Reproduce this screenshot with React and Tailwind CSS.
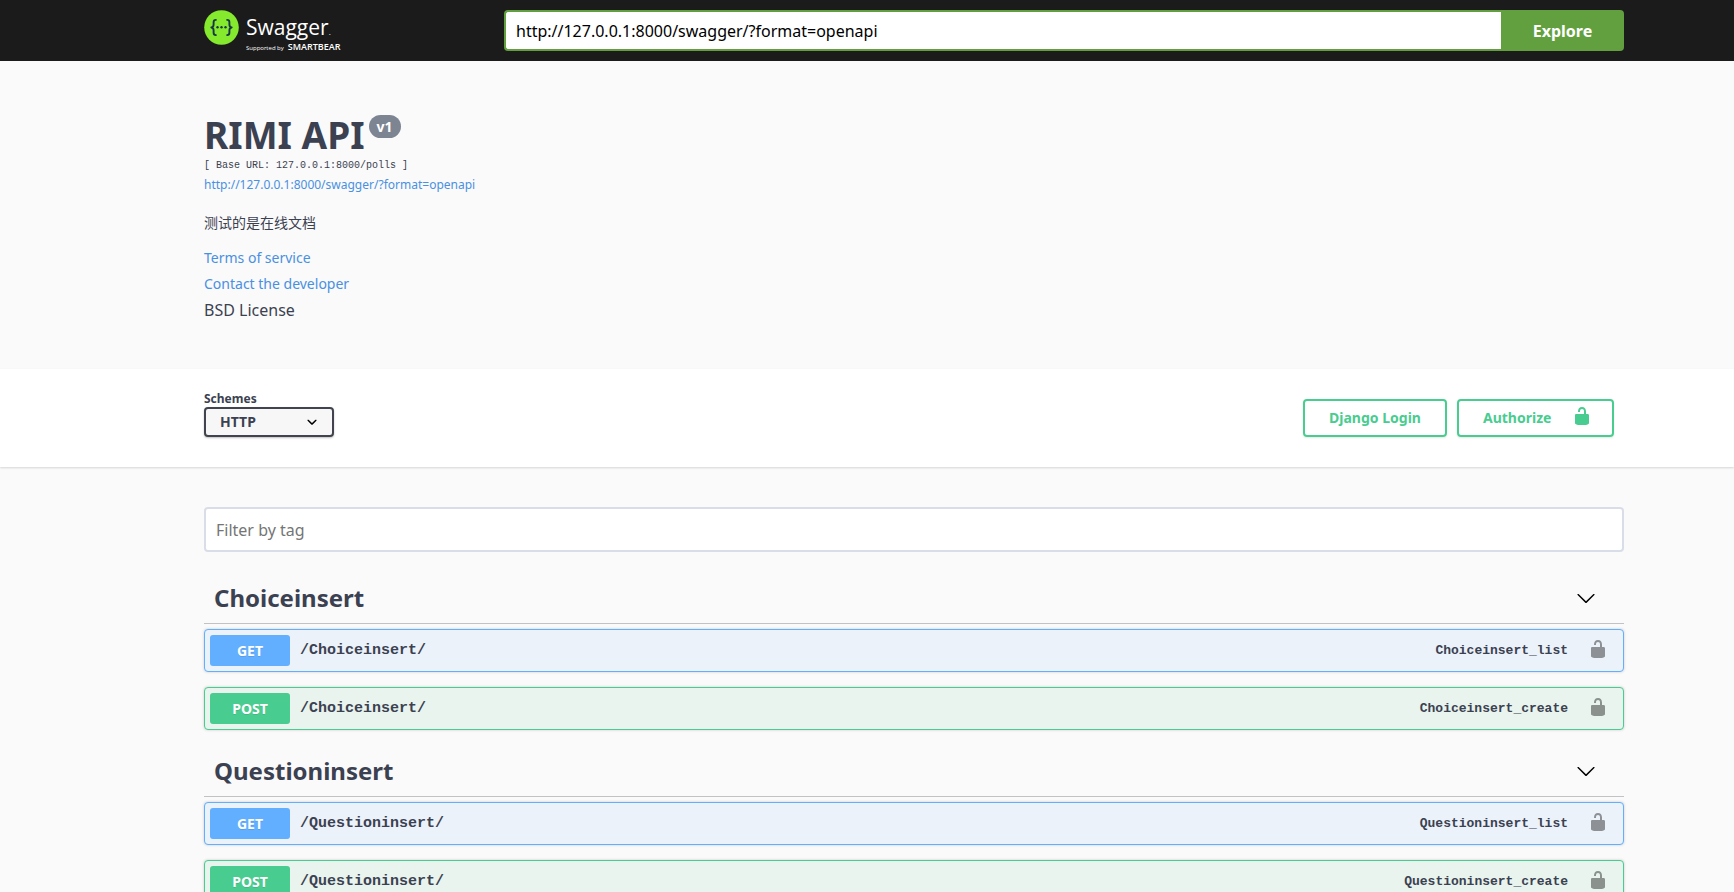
const sections = [
  {
    tag: 'Choiceinsert',
    operations: [
      { method: 'GET', path: '/Choiceinsert/', id: 'Choiceinsert_list' },
      { method: 'POST', path: '/Choiceinsert/', id: 'Choiceinsert_create' },
    ],
  },
  {
    tag: 'Questioninsert',
    operations: [
      { method: 'GET', path: '/Questioninsert/', id: 'Questioninsert_list' },
      { method: 'POST', path: '/Questioninsert/', id: 'Questioninsert_create' },
    ],
  },
];

const methodStyles = {
  GET: { row: 'border-[#61affe] bg-[#ebf2fa]', badge: 'bg-[#61affe]' },
  POST: { row: 'border-[#49cc90] bg-[#e8f4ed]', badge: 'bg-[#49cc90]' },
};

function UnlockIcon({ className }) {
  return (
    <svg viewBox="0 0 20 20" className={className} fill="currentColor" aria-hidden="true">
      <path d="M15.8 8H14V5.6C14 2.703 12.665 1 10 1 7.334 1 6 2.703 6 5.6V6h2v-.801C8 3.754 8.797 3 10 3c1.203 0 2 .754 2 2.199V8H4c-.553 0-1 .646-1 1.199V17c0 .549.428 1.139.951 1.307l1.197.387C5.672 18.861 6.55 19 7.1 19h5.8c.549 0 1.428-.139 1.951-.307l1.196-.387c.524-.167.953-.757.953-1.306V9.199C17 8.646 16.352 8 15.8 8z" />
    </svg>
  );
}

function Chevron({ className }) {
  return (
    <svg viewBox="0 0 20 20" className={className} fill="currentColor" aria-hidden="true">
      <path d="M17.418 6.109c.272-.268.709-.268.979 0s.271.701 0 .969l-7.908 7.83c-.27.268-.707.268-.979 0l-7.908-7.83c-.27-.268-.27-.701 0-.969.271-.268.709-.268.979 0L10 13.25l7.418-7.141z" />
    </svg>
  );
}

function SelectArrow({ className }) {
  return (
    <svg viewBox="0 0 20 20" className={className} fill="currentColor" aria-hidden="true">
      <path d="M13.418 7.859c.271-.268.709-.268.978 0 .27.268.272.701 0 .969l-3.908 3.83c-.27.268-.707.268-.979 0l-3.908-3.83c-.27-.267-.27-.701 0-.969.271-.268.709-.268.978 0L10 11l3.418-3.141z" />
    </svg>
  );
}

function Logo() {
  return (
    <a href="#" aria-label="Swagger" className="flex h-[41px] w-[300px] shrink-0 gap-[7px] text-white">
      <svg viewBox="0 0 35 35" className="size-[35px]" aria-hidden="true">
        <circle cx="17.5" cy="17.5" r="17.3" fill="#85ea2d" />
        <g fill="none" stroke="#173647" strokeWidth="1.9" strokeLinejoin="round">
          <path d="M12.6 9.9h-.7c-1.7 0-2.3.8-2.3 2.3v2.3c0 1.7-.6 2.8-2.3 3 1.7.2 2.3 1.3 2.3 3v2.3c0 1.5.6 2.3 2.3 2.3h.7" />
          <path d="M22.4 9.9h.7c1.7 0 2.3.8 2.3 2.3v2.3c0 1.7.6 2.8 2.3 3-1.7.2-2.3 1.3-2.3 3v2.3c0 1.5-.6 2.3-2.3 2.3h-.7" />
        </g>
        <g fill="#173647">
          <circle cx="13.5" cy="17.3" r="1.2" />
          <circle cx="17.5" cy="17.3" r="1.2" />
          <circle cx="21.5" cy="17.3" r="1.2" />
        </g>
      </svg>
      <span className="flex flex-col pt-[7px] font-['Open_Sans',sans-serif]">
        <span className="text-[21px] leading-5">
          Swagger<span className="text-[8px]">.</span>
        </span>
        <span className="flex items-baseline gap-1 text-[6px] leading-[10px]">
          Supported by
          <b className="text-[9px] font-semibold">SMARTBEAR</b>
        </span>
      </span>
    </a>
  );
}

function Operation({ method, path, id }) {
  const style = methodStyles[method];
  return (
    <div className={`flex items-center rounded border p-[5px] shadow-[0_0_3px_rgba(0,0,0,0.19)] ${style.row}`}>
      <span className={`w-20 rounded-[3px] text-center text-sm leading-[31px] font-bold text-white [text-shadow:0_1px_0_rgba(0,0,0,0.1)] ${style.badge}`}>
        {method}
      </span>
      <a href={`#${id}`} className="flex-1 px-[10px] pt-px font-['Liberation_Mono',monospace] text-[15px] leading-[30px] font-bold">
        {path}
      </a>
      <span className="pt-px font-['Liberation_Mono',monospace] text-[13px] leading-[30px] font-bold">{id}</span>
      <button type="button" aria-label={`Authorize ${id}`} className="mr-[10px] ml-5 h-[31px] pb-1 text-black/40">
        <UnlockIcon className="size-5" />
      </button>
    </div>
  );
}

export default function App() {
  return (
    <div className="min-h-screen bg-[#fafafa] font-['Noto_Sans','Noto_Sans_CJK_SC',sans-serif] text-[#3b4151]">
      <header className="bg-[#1b1b1b] py-[10px] pr-[110px] pl-51">
        <form className="flex">
          <Logo />
          <input
            type="text"
            aria-label="API definition URL"
            defaultValue="http://127.0.0.1:8000/swagger/?format=openapi"
            className="h-[41px] min-w-0 flex-1 rounded-l border-2 border-r-0 border-[#62a03f] bg-white px-[10px] text-base text-black outline-none"
          />
          <button type="button" className="w-[123px] rounded-r bg-[#62a03f] text-base font-bold text-white">
            Explore
          </button>
        </form>
      </header>

      <section className="pt-[50px] pr-[110px] pb-[46px] pl-51">
        <div className="flex items-start gap-1">
          <h1 className="text-[37px] leading-[48px] font-bold">RIMI API</h1>
          <span className="mt-1 rounded-full bg-[#7d8492] px-2 text-sm leading-[23px] font-bold text-white">v1</span>
        </div>
        <pre className="font-['Liberation_Mono',monospace] text-[10px] leading-[14px]">[ Base URL: 127.0.0.1:8000/polls ]</pre>
        <a href="#openapi" className="block pt-[2px] text-xs leading-5 text-[#4990e2]">
          http://127.0.0.1:8000/swagger/?format=openapi
        </a>
        <p className="pt-[18px] text-sm leading-5">测试的是在线文档</p>
        <div className="flex flex-col items-start pt-3 leading-[26px]">
          <a href="#terms" className="text-sm leading-[26px] text-[#4990e2]">Terms of service</a>
          <a href="#contact" className="text-sm leading-[26px] text-[#4990e2]">Contact the developer</a>
          <span>BSD License</span>
        </div>
      </section>

      <section className="flex items-start justify-between bg-white pt-[22px] pr-[120px] pb-[30px] pl-51 shadow-[0_1px_2px_rgba(0,0,0,0.15)]">
        <label className="flex flex-col text-xs leading-4 font-bold">
          Schemes
          <span className="relative flex">
            <select className="h-[30px] w-[130px] appearance-none rounded border-2 border-[#41444e] bg-[#f7f7f7] px-[14px] text-sm font-bold shadow-[0_1px_2px_rgba(0,0,0,0.25)]">
              <option>HTTP</option>
            </select>
            <SelectArrow className="pointer-events-none absolute top-[5px] right-3 size-5 text-black" />
          </span>
        </label>
        <div className="flex gap-[10px] pt-2 text-sm font-bold text-[#49cc90]">
          <button type="button" className="h-[38px] w-36 rounded border-2 border-[#49cc90] shadow-[0_1px_2px_rgba(0,0,0,0.1)]">
            Django Login
          </button>
          <button type="button" className="flex h-[38px] w-[157px] items-center justify-between rounded border-2 border-[#49cc90] pr-5 pl-6 shadow-[0_1px_2px_rgba(0,0,0,0.1)]">
            Authorize
            <UnlockIcon className="mb-1 size-5" />
          </button>
        </div>
      </section>

      <main className="pt-10 pr-[110px] pb-10 pl-51">
        <input
          type="text"
          aria-label="Filter by tag"
          placeholder="Filter by tag"
          className="mb-5 block h-[45px] w-full rounded border-2 border-[#d8dde7] bg-white px-[10px] text-base outline-none placeholder:text-[#757575]"
        />
        {sections.map((section) => (
          <section key={section.tag} className="mb-[15px]">
            <div className="mb-[5px] flex h-[52px] items-center justify-between border-b border-[#3b4151]/30 pr-7 pl-[10px]">
              <h2 className="text-2xl font-bold">{section.tag}</h2>
              <button type="button" aria-label={`Toggle ${section.tag}`} className="text-black">
                <Chevron className="size-5" />
              </button>
            </div>
            <div className="flex flex-col gap-[15px]">
              {section.operations.map((op) => (
                <Operation key={op.id} {...op} />
              ))}
            </div>
          </section>
        ))}
      </main>
    </div>
  );
}
